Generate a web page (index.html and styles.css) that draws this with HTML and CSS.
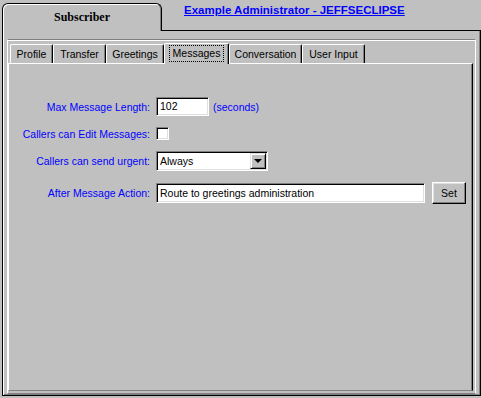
FILE: index.html
```html
<!DOCTYPE html>
<html lang="en">
<head>
    <meta charset="UTF-8">
    <title>Subscriber - Messages</title>
    <link rel="stylesheet" href="styles.css">
</head>
<body>

    <div class="top">
        <div class="main-tab">Subscriber</div>
        <a class="title" href="#">Example Administrator - JEFFSECLIPSE</a>
    </div>

    <div class="frame">
        <div class="sub">
            <!-- page tabs -->
            <div class="tabs">
                <div class="tab t-profile">Profile</div>
                <div class="tab t-transfer">Transfer</div>
                <div class="tab t-greetings">Greetings</div>
                <div class="tab t-messages active"><span class="focus">Messages</span></div>
                <div class="tab t-conversation">Conversation</div>
                <div class="tab t-input">User Input</div>
            </div>

            <div class="page">
                <div class="form">
                    <label class="lbl">Max Message Length:</label>
                    <div class="ctl">
                        <div class="field short">102</div>
                        <span class="unit">(seconds)</span>
                    </div>

                    <label class="lbl">Callers can Edit Messages:</label>
                    <div class="ctl">
                        <div class="check"></div>
                    </div>

                    <label class="lbl">Callers can send urgent:</label>
                    <div class="ctl">
                        <div class="field combo">
                            <span>Always</span>
                            <span class="drop"><i class="arrow"></i></span>
                        </div>
                    </div>

                    <label class="lbl">After Message Action:</label>
                    <div class="ctl">
                        <div class="field long">Route to greetings administration</div>
                        <button class="btn">Set</button>
                    </div>
                </div>
            </div>
        </div>
    </div>

</body>
</html>
```

FILE: styles.css
```css
body {
    margin: 0;
    background-color: #c0c0c0;
    font-family: "Liberation Sans", Arial, sans-serif;
    font-size: 10.5px;
    color: #000;
    width: 481px;
    height: 398px;
    overflow: hidden;
}

/* big tab + title */
.top {
    display: flex;
    align-items: flex-start;
    padding-top: 3px;
    padding-left: 2px;
}

.main-tab {
    position: relative;
    z-index: 1;
    box-sizing: border-box;
    width: 160px;
    height: 28px;
    margin-bottom: -1px;
    border: 1px solid #000;
    border-bottom: none;
    border-radius: 6px 6px 0 0;
    box-shadow: inset 1px 1px #fff, inset -1px 0 #808080;
    background-color: #c0c0c0;
    font-family: "Liberation Serif", "Times New Roman", serif;
    font-weight: bold;
    font-size: 12px;
    text-align: center;
    line-height: 27px;
}

.title {
    margin-left: 22px;
    margin-top: 1px;
    color: #0000ff;
    font-weight: bold;
    font-size: 11.5px;
    text-decoration: underline;
}

/* outer frame */
.frame {
    margin-left: 2px;
    box-sizing: border-box;
    width: 479px;
    height: 366px;
    border: 1px solid #000;
    box-shadow: inset 1px 0 #fff, inset -1px -1px #808080;
    padding: 8px 4px 0 4px;
}

.sub {
    box-sizing: border-box;
    height: 355px;
    border-top: 1px solid #808080;
    border-left: 1px solid #fff;
    border-right: 1px solid #fff;
    border-bottom: 1px solid #808080;
    box-shadow: inset 0 1px #fff;
    padding-top: 4px;
}

/* page tabs */
.tabs {
    display: flex;
    align-items: flex-end;
    height: 19px;
    padding-left: 2px;
}

.tab {
    box-sizing: border-box;
    height: 19px;
    border-top: 1px solid #fff;
    border-left: 1px solid #fff;
    border-right: 1px solid #000;
    border-radius: 2px 2px 0 0;
    box-shadow: inset -1px 0 #808080;
    text-align: center;
    line-height: 18px;
}

.t-profile { width: 43px; }
.t-transfer { width: 53px; }
.t-greetings { width: 58px; }
.t-messages { width: 65px; }
.t-conversation { width: 73px; }
.t-input { width: 63px; }

.tab.active {
    position: relative;
    z-index: 1;
    height: 21px;
    margin-bottom: -1px;
    background-color: #c0c0c0;
    line-height: 19px;
}

.tab .focus {
    display: inline-block;
    padding: 0 3px;
    line-height: 15px;
    outline: 1px dotted #000;
}

.page {
    box-sizing: border-box;
    width: 465px;
    height: 328px;
    border-top: 1px solid #fff;
    border-left: 1px solid #fff;
    border-right: 1px solid #000;
    border-bottom: 1px solid #808080;
    box-shadow: inset -1px 0 #808080;
    padding-top: 33px;
}

/* form */
.form {
    display: grid;
    grid-template-columns: 141px auto;
    column-gap: 6px;
    row-gap: 11px;
    align-items: center;
}

.lbl {
    color: #0000ff;
    text-align: right;
    white-space: nowrap;
}

.ctl {
    display: flex;
    align-items: center;
}

.field {
    box-sizing: border-box;
    height: 19px;
    border: 1px solid;
    border-color: #808080 #fff #fff #808080;
    box-shadow: inset 1px 1px #000, inset -1px -1px #dfdfdf;
    background-color: #fff;
    padding: 0 3px;
    line-height: 17px;
}

.short {
    width: 53px;
}

.long {
    width: 269px;
    height: 20px;
    line-height: 18px;
}

.unit {
    margin-left: 4px;
    color: #0000ff;
}

.check {
    box-sizing: border-box;
    width: 13px;
    height: 13px;
    border: 1px solid;
    border-color: #808080 #fff #fff #808080;
    box-shadow: inset 1px 1px #000, inset -1px -1px #dfdfdf;
    background-color: #fff;
}

.combo {
    display: flex;
    justify-content: space-between;
    align-items: center;
    width: 112px;
    height: 20px;
    padding: 0 1px 0 3px;
}

.drop {
    box-sizing: border-box;
    display: flex;
    align-items: center;
    justify-content: center;
    width: 16px;
    height: 16px;
    border: 1px solid;
    border-color: #dfdfdf #000 #000 #dfdfdf;
    box-shadow: inset 1px 1px #fff, inset -1px -1px #808080;
    background-color: #c0c0c0;
}

.arrow {
    width: 0;
    height: 0;
    border-left: 4px solid transparent;
    border-right: 4px solid transparent;
    border-top: 4px solid #000;
}

.btn {
    box-sizing: border-box;
    width: 34px;
    height: 22px;
    margin-left: 7px;
    border: 1px solid;
    border-color: #fff #000 #000 #fff;
    box-shadow: inset -1px -1px #808080, inset 1px 1px #dfdfdf;
    background-color: #c0c0c0;
    font-family: "Liberation Sans", Arial, sans-serif;
    font-size: 10.5px;
    padding: 0;
}
```
